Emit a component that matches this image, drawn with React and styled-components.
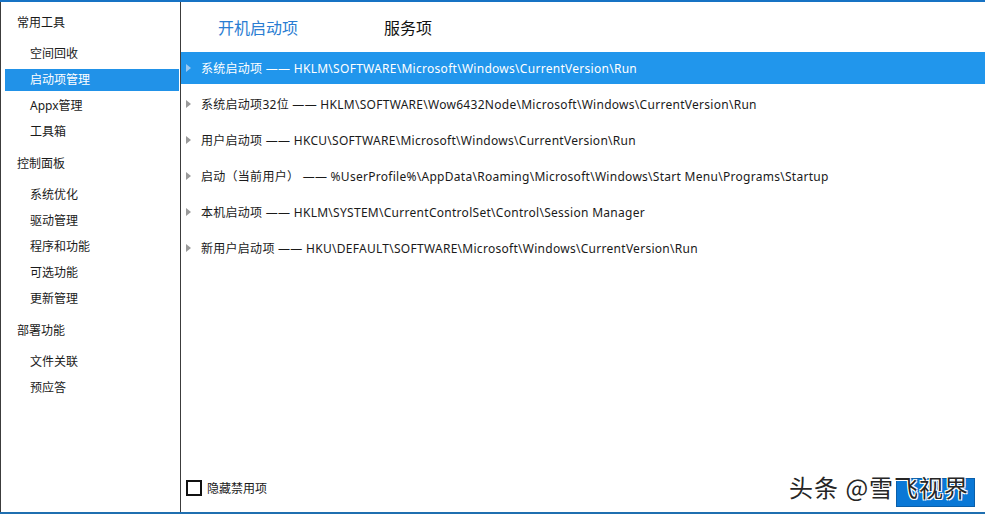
import React, { useState } from 'react';
import styled, { createGlobalStyle } from 'styled-components';

const GlobalStyle = createGlobalStyle`
    html, body {
        margin: 0;
        padding: 0;
        background: #ffffff;
        overflow: hidden;
    }
    body {
        font-family: "Noto Sans", "Noto Sans CJK SC", sans-serif;
        color: #1a1a1a;
    }
`;

const Frame = styled.div`
    position: relative;
    width: 985px;
    height: 514px;
    box-sizing: border-box;
    border-top: 2px solid #1773c4;
    border-bottom: 2px solid #1f6fb0;
    display: flex;
    background: #fff;
`;

const Sidebar = styled.div`
    width: 181px;
    box-sizing: border-box;
    border-left: 1px solid #3c3c3c;
    border-right: 1px solid #3c3c3c;
    padding-top: 2px;
    display: flex;
    flex-direction: column;
`;

const Group = styled.div`
    padding-top: 6px;
    display: flex;
    flex-direction: column;
`;

const GroupTitle = styled.div`
    height: 26px;
    line-height: 26px;
    padding-left: 16px;
    margin-bottom: 5px;
    font-size: 12px;
    color: #1a1a1a;
`;

const SideItem = styled.div`
    height: 22px;
    line-height: 22px;
    margin: 2px 1px 2px 4px;
    padding-left: 25px;
    font-size: 12px;
    color: ${props => props.active ? '#ffffff' : '#1a1a1a'};
    background: ${props => props.active ? '#2192e8' : 'transparent'};
    cursor: default;
`;

const Main = styled.div`
    flex: 1;
    display: flex;
    flex-direction: column;
    min-width: 0;
`;

const TabBar = styled.div`
    height: 50px;
    padding-left: 2px;
    display: flex;
    align-items: center;
`;

const Tab = styled.div`
    width: 150px;
    text-align: center;
    font-size: 16px;
    color: ${props => props.active ? '#2a7dd2' : '#111111'};
    cursor: default;
`;

const List = styled.div`
    flex: 1;
    display: flex;
    flex-direction: column;
`;

const Row = styled.div`
    height: 32px;
    margin-bottom: 4px;
    padding-left: 5px;
    display: flex;
    align-items: center;
    font-size: 12px;
    letter-spacing: 0.28px;
    white-space: nowrap;
    color: ${props => props.active ? '#ffffff' : '#1a1a1a'};
    background: ${props => props.active ? '#2196ec' : 'transparent'};
`;

const Arrow = styled.span`
    width: 0;
    height: 0;
    border-top: 4px solid transparent;
    border-bottom: 4px solid transparent;
    border-left: 5px solid ${props => props.active ? '#9cc8f0' : '#9a9a9a'};
    margin-right: 10px;
`;

const BottomBar = styled.div`
    height: 29px;
    margin-bottom: 5px;
    display: flex;
    align-items: flex-start;
    padding-left: 5px;
`;

const CheckLabel = styled.label`
    display: flex;
    align-items: center;
    margin-top: 1px;
    font-size: 12px;
    color: #1a1a1a;
`;

const Box = styled.span`
    width: 12px;
    height: 12px;
    border: 2px solid #111;
    margin-right: 5px;
    display: inline-block;
`;

const Button = styled.div`
    margin-left: auto;
    margin-right: 10px;
    width: 79px;
    height: 29px;
    box-sizing: border-box;
    background: #0a78d6;
    border: 1px solid #0a5faa;
`;

const Watermark = styled.div`
    position: absolute;
    left: 789px;
    top: 469px;
    font-size: 24px;
    line-height: 32px;
    letter-spacing: 1px;
    color: #262626;
    font-family: "Noto Sans CJK SC", sans-serif;
    text-shadow: 1px 1px 0 #fff, -1px -1px 0 #fff, 1px -1px 0 #fff, -1px 1px 0 #fff;
    white-space: nowrap;
    pointer-events: none;
`;

const groups = [
    { title: '常用工具', items: ['空间回收', '启动项管理', 'Appx管理', '工具箱'] },
    { title: '控制面板', items: ['系统优化', '驱动管理', '程序和功能', '可选功能', '更新管理'] },
    { title: '部署功能', items: ['文件关联', '预应答'] },
];

const entries = [
    '系统启动项 —— HKLM\\SOFTWARE\\Microsoft\\Windows\\CurrentVersion\\Run',
    '系统启动项32位 —— HKLM\\SOFTWARE\\Wow6432Node\\Microsoft\\Windows\\CurrentVersion\\Run',
    '用户启动项 —— HKCU\\SOFTWARE\\Microsoft\\Windows\\CurrentVersion\\Run',
    '启动（当前用户） —— %UserProfile%\\AppData\\Roaming\\Microsoft\\Windows\\Start Menu\\Programs\\Startup',
    '本机启动项 —— HKLM\\SYSTEM\\CurrentControlSet\\Control\\Session Manager',
    '新用户启动项 —— HKU\\DEFAULT\\SOFTWARE\\Microsoft\\Windows\\CurrentVersion\\Run',
];

export default function App() {
    const [page, setPage] = useState('启动项管理');
    const [tab, setTab] = useState(0);
    const [row, setRow] = useState(0);

    return (
        <>
            <GlobalStyle />
            <Frame>
                <Sidebar>
                    {groups.map(g => (
                        <Group key={g.title}>
                            <GroupTitle>{g.title}</GroupTitle>
                            {g.items.map(item => (
                                <SideItem key={item} active={page === item} onClick={() => setPage(item)}>
                                    {item}
                                </SideItem>
                            ))}
                        </Group>
                    ))}
                </Sidebar>
                <Main>
                    <TabBar>
                        {['开机启动项', '服务项'].map((t, i) => (
                            <Tab key={t} active={tab === i} onClick={() => setTab(i)}>{t}</Tab>
                        ))}
                    </TabBar>
                    <List>
                        {entries.map((e, i) => (
                            <Row key={e} active={row === i} onClick={() => setRow(i)}>
                                <Arrow active={row === i} />
                                {e}
                            </Row>
                        ))}
                    </List>
                    <BottomBar>
                        <CheckLabel>
                            <Box />
                            隐藏禁用项
                        </CheckLabel>
                        <Button />
                    </BottomBar>
                </Main>
                <Watermark>头条 @雪飞视界</Watermark>
            </Frame>
        </>
    );
}
